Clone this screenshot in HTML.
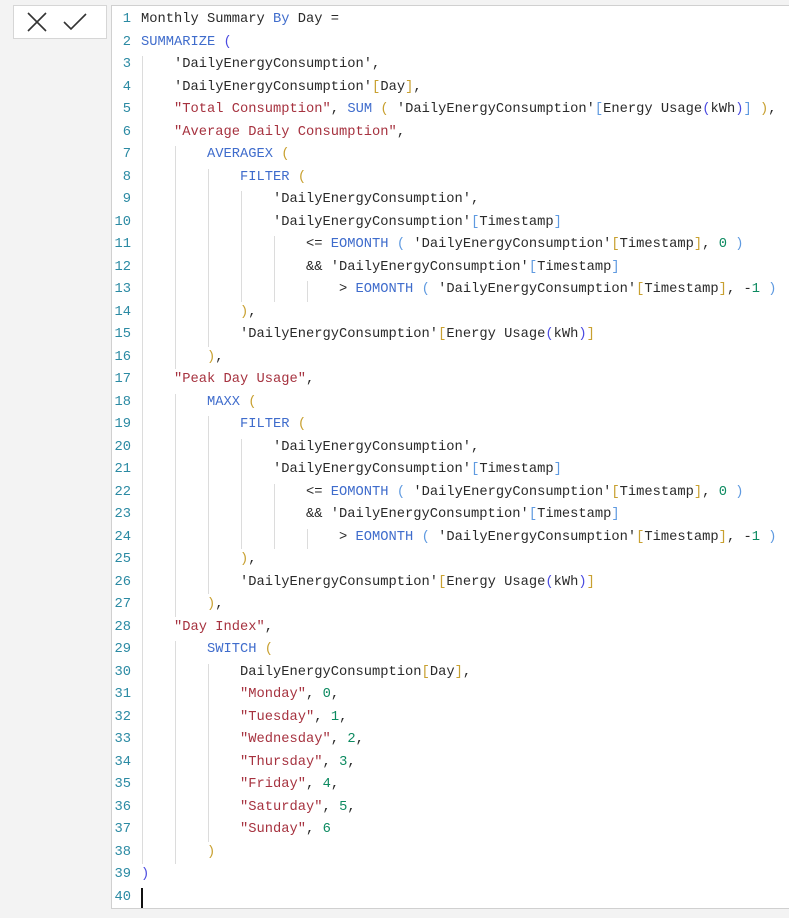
<!DOCTYPE html>
<html><head><meta charset="utf-8"><style>
body{margin:0;width:789px;height:918px;background:#f3f3f3;overflow:hidden;position:relative;font-family:"Liberation Mono",monospace;}
.btns{position:absolute;left:13px;top:5px;width:92px;height:32px;background:#fff;border:1px solid #d6d6d6;}
.ed{position:absolute;left:111px;top:5px;width:690px;height:902px;background:#fff;border:1px solid #d0d0d0;}
.ln{position:absolute;left:112px;width:19px;text-align:right;color:#2b8aa3;font-size:13.75px;height:22.5px;line-height:22.5px;}
.c{position:absolute;left:141px;white-space:pre;font-size:13.75px;height:22.5px;line-height:22.5px;color:#2a2a2a;}
.k{color:#3f6ccc}.s{color:#a6323f}.n{color:#0c8a60}.p0{color:#4b4be0}.p1{color:#c8a030}.p3{color:#5f9ae0}
.g{position:absolute;width:1px;background:#dcdcdc;}
.cur{position:absolute;left:141px;top:888px;width:2px;height:20px;background:#111;}
</style></head><body>
<div class="btns">
<svg width="92" height="32" style="position:absolute;left:0;top:0"><path d="M14 7 L32 25 M32 7 L14 25" stroke="#333" stroke-width="1.6" fill="none"/><path d="M50 16 L57 23 L72 8" stroke="#333" stroke-width="1.6" fill="none"/></svg>
</div>
<div class="ed"></div>
<div id="root"></div>
<script>
const L=[
'Monthly Summary <span class="k">By</span> Day =',
'<span class="k">SUMMARIZE</span> <span class="p0">(</span>',
"    'DailyEnergyConsumption',",
"    'DailyEnergyConsumption'<span class=\"p1\">[</span>Day<span class=\"p1\">]</span>,",
'    <span class="s">"Total Consumption"</span>, <span class="k">SUM</span> <span class="p1">(</span> \'DailyEnergyConsumption\'<span class="p3">[</span>Energy Usage<span class="p0">(</span>kWh<span class="p0">)</span><span class="p3">]</span> <span class="p1">)</span>,',
'    <span class="s">"Average Daily Consumption"</span>,',
'        <span class="k">AVERAGEX</span> <span class="p1">(</span>',
'            <span class="k">FILTER</span> <span class="p1">(</span>',
"                'DailyEnergyConsumption',",
"                'DailyEnergyConsumption'<span class=\"p3\">[</span>Timestamp<span class=\"p3\">]</span>",
'                    &lt;= <span class="k">EOMONTH</span> <span class="p3">(</span> \'DailyEnergyConsumption\'<span class="p1">[</span>Timestamp<span class="p1">]</span>, <span class="n">0</span> <span class="p3">)</span>',
"                    &amp;&amp; 'DailyEnergyConsumption'<span class=\"p3\">[</span>Timestamp<span class=\"p3\">]</span>",
'                        &gt; <span class="k">EOMONTH</span> <span class="p3">(</span> \'DailyEnergyConsumption\'<span class="p1">[</span>Timestamp<span class="p1">]</span>, -<span class="n">1</span> <span class="p3">)</span>',
'            <span class="p1">)</span>,',
"            'DailyEnergyConsumption'<span class=\"p1\">[</span>Energy Usage<span class=\"p0\">(</span>kWh<span class=\"p0\">)</span><span class=\"p1\">]</span>",
'        <span class="p1">)</span>,',
'    <span class="s">"Peak Day Usage"</span>,',
'        <span class="k">MAXX</span> <span class="p1">(</span>',
'            <span class="k">FILTER</span> <span class="p1">(</span>',
"                'DailyEnergyConsumption',",
"                'DailyEnergyConsumption'<span class=\"p3\">[</span>Timestamp<span class=\"p3\">]</span>",
'                    &lt;= <span class="k">EOMONTH</span> <span class="p3">(</span> \'DailyEnergyConsumption\'<span class="p1">[</span>Timestamp<span class="p1">]</span>, <span class="n">0</span> <span class="p3">)</span>',
"                    &amp;&amp; 'DailyEnergyConsumption'<span class=\"p3\">[</span>Timestamp<span class=\"p3\">]</span>",
'                        &gt; <span class="k">EOMONTH</span> <span class="p3">(</span> \'DailyEnergyConsumption\'<span class="p1">[</span>Timestamp<span class="p1">]</span>, -<span class="n">1</span> <span class="p3">)</span>',
'            <span class="p1">)</span>,',
"            'DailyEnergyConsumption'<span class=\"p1\">[</span>Energy Usage<span class=\"p0\">(</span>kWh<span class=\"p0\">)</span><span class=\"p1\">]</span>",
'        <span class="p1">)</span>,',
'    <span class="s">"Day Index"</span>,',
'        <span class="k">SWITCH</span> <span class="p1">(</span>',
'            DailyEnergyConsumption<span class="p1">[</span>Day<span class="p1">]</span>,',
'            <span class="s">"Monday"</span>, <span class="n">0</span>,',
'            <span class="s">"Tuesday"</span>, <span class="n">1</span>,',
'            <span class="s">"Wednesday"</span>, <span class="n">2</span>,',
'            <span class="s">"Thursday"</span>, <span class="n">3</span>,',
'            <span class="s">"Friday"</span>, <span class="n">4</span>,',
'            <span class="s">"Saturday"</span>, <span class="n">5</span>,',
'            <span class="s">"Sunday"</span>, <span class="n">6</span>',
'        <span class="p1">)</span>',
'<span class="p0">)</span>',
''];
const T=9,H=22.5,CW=8.25;
let h='';
L.forEach((t,i)=>{const y=T+i*H;h+=`<div class="ln" style="top:${y}px">${i+1}</div><div class="c" style="top:${y}px">${t}</div>`;});
const G=[[0,3,38],[4,7,16],[4,18,27],[4,29,38],[8,8,15],[8,19,26],[8,30,37],[12,9,13],[12,20,24],[16,11,13],[16,22,24],[20,13,13],[20,24,24]];
G.forEach(([c,a,b])=>{h+=`<div class="g" style="left:${Math.round(142+c*CW)}px;top:${T+(a-1)*H+2}px;height:${(b-a+1)*H-2}px"></div>`;});
h+='<div class="cur"></div>';
document.getElementById('root').innerHTML=h;
</script>
</body></html>
